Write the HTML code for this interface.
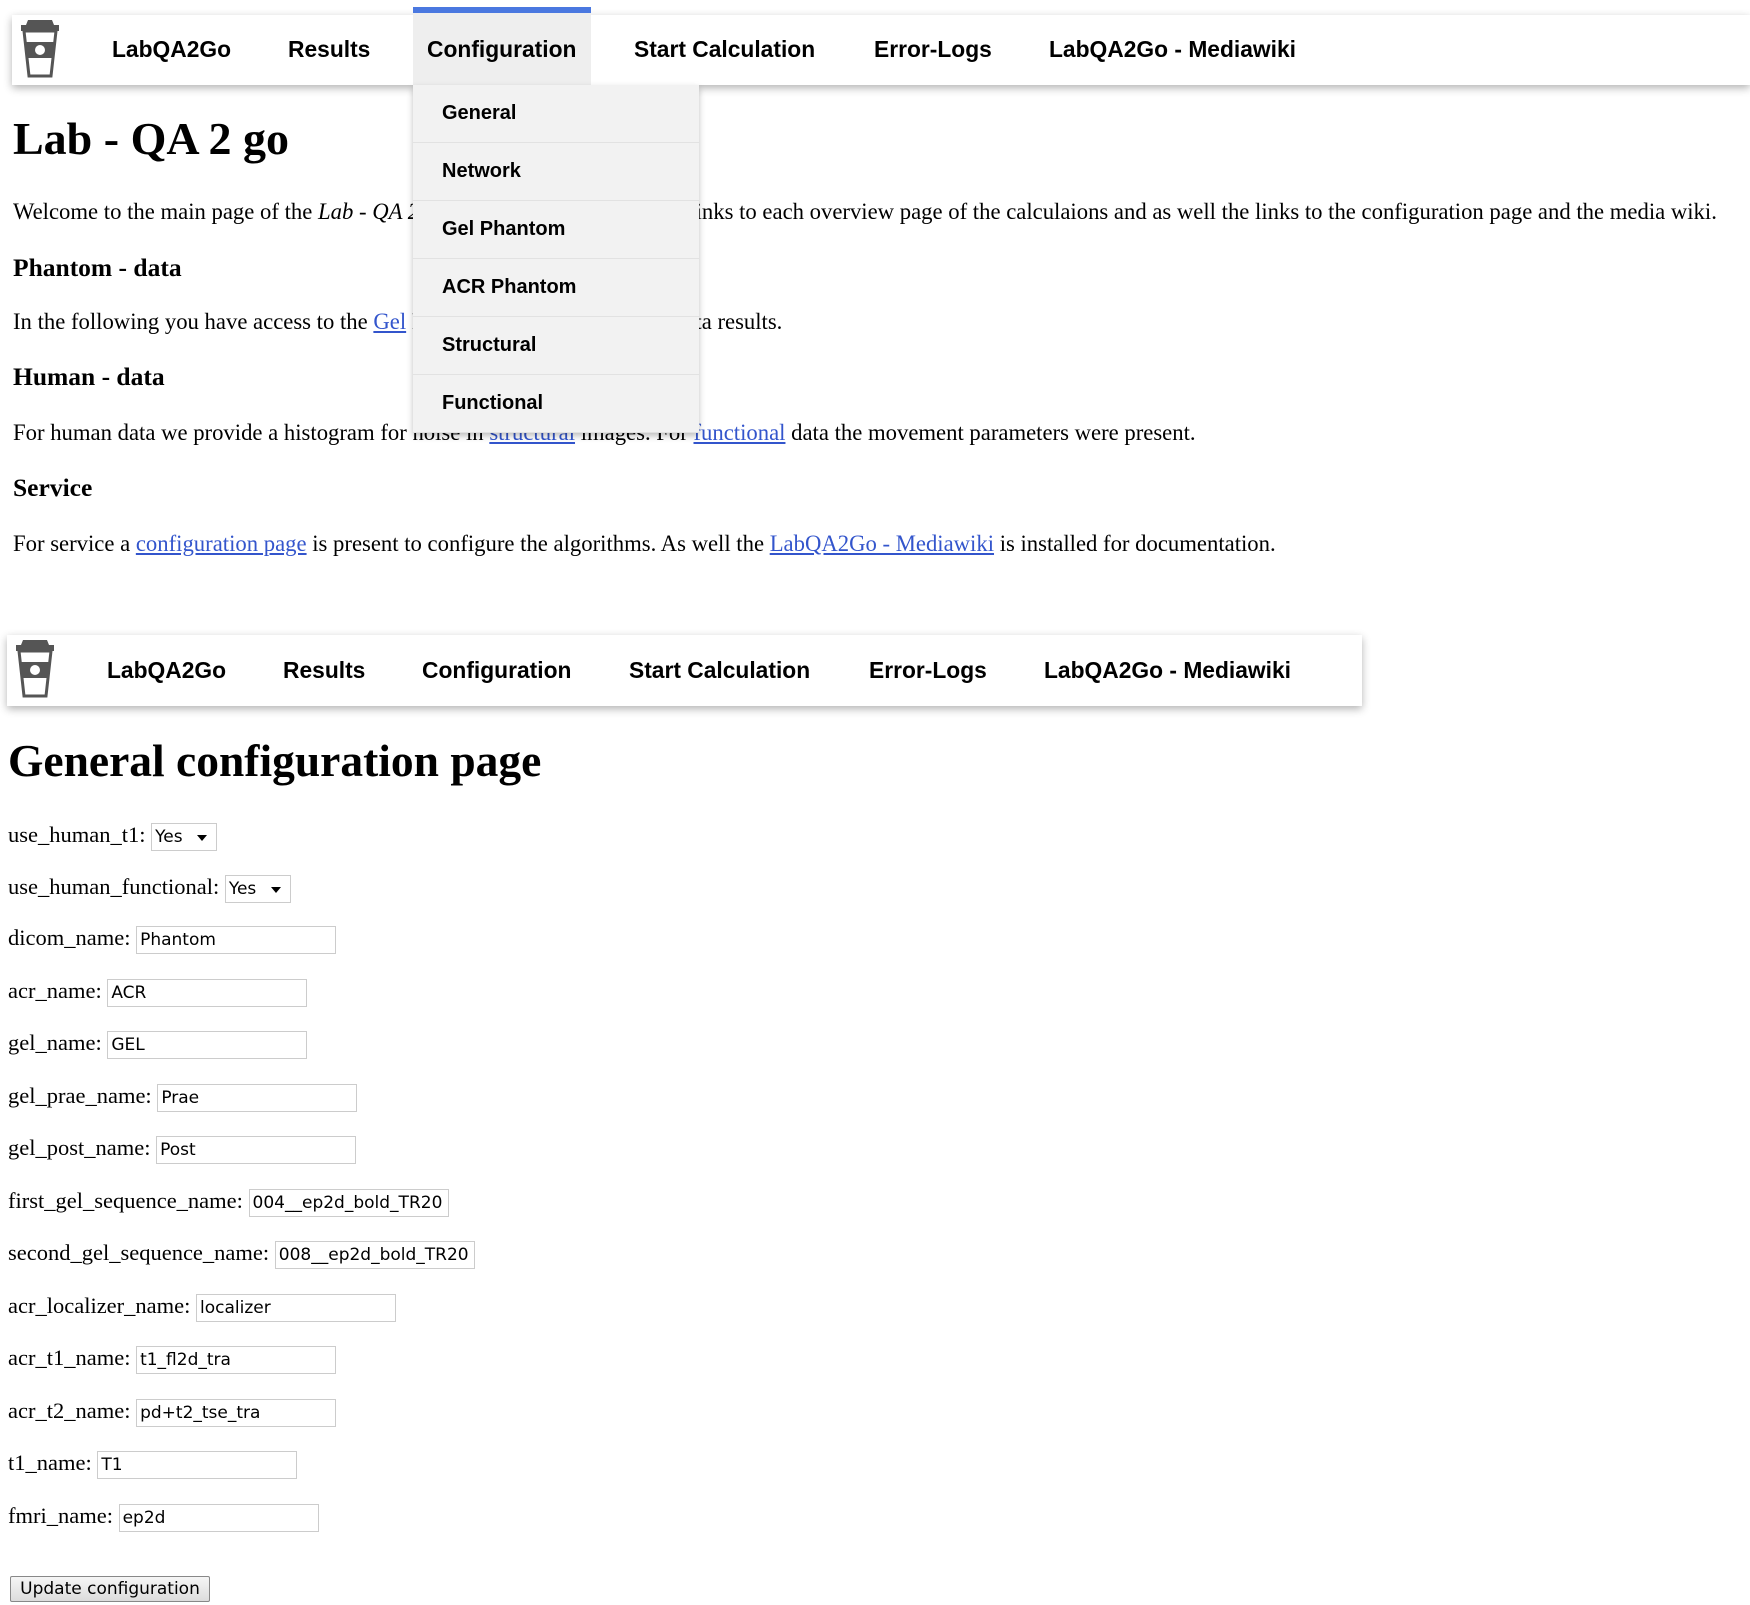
<!DOCTYPE html>
<html><head><meta charset="utf-8"><style>
html,body{margin:0;padding:0;background:#fff;width:1750px;height:1605px;overflow:hidden;position:relative;font-family:"Liberation Serif",serif;color:#000}
.nav{position:absolute;background:#fff;box-shadow:0 3px 8px rgba(0,0,0,.3)}
.nav span{position:absolute;font-family:"Liberation Sans",sans-serif;font-weight:bold;font-size:22.8px;white-space:nowrap}
.abs{position:absolute;white-space:nowrap}
p.t{position:absolute;left:13px;margin:0;font-size:22.7px;white-space:nowrap;line-height:26px}
h3.t{position:absolute;left:13px;margin:0;font-size:25.5px;line-height:28px}
a{color:#3355cc;text-decoration:underline}
.dd{position:absolute;left:413px;top:85px;width:286px;background:#f2f2f2;box-shadow:0 3px 6px rgba(0,0,0,.25)}
.dd div{height:57px;border-bottom:1px solid #e2e2e2;font-family:"Liberation Sans",sans-serif;font-weight:bold;font-size:20px;line-height:57px;padding-left:29px}
.row{position:absolute;left:8px;font-size:22.5px;white-space:nowrap;height:30px;line-height:30px}
.row input,.row .sel{font-family:"DejaVu Sans","Liberation Sans",sans-serif;font-size:17px;height:28px;box-sizing:border-box;border:1px solid #ccc;padding:0 3px;vertical-align:middle;background:#fff;color:#000}
.row input{width:200px}
.sel{display:inline-block;line-height:26px;width:66px;position:relative}
.sel:after{content:"";position:absolute;right:9px;top:11px;border-left:5px solid transparent;border-right:5px solid transparent;border-top:6px solid #000}
</style></head><body>

<div class="nav" style="left:12px;top:15px;width:1738px;height:70px">
<svg style="position:absolute;left:2px;top:3px" width="52" height="60" viewBox="0 0 52 60"><path d="M14 2h24l2 5H12z" fill="#555"/><rect x="7" y="7" width="38" height="6" fill="#555"/><path d="M10 13h32l-5 45H15z" fill="none" stroke="#555" stroke-width="3"/><rect x="12" y="24" width="28" height="16" fill="#555"/><circle cx="26" cy="32" r="5" fill="#fff"/></svg>
<span style="left:100px;top:21px">LabQA2Go</span>
<span style="left:276px;top:21px">Results</span>
<div style="position:absolute;left:401px;top:-8px;width:178px;height:78px;background:#eee;border-top:6px solid #4a78e0;box-sizing:border-box"></div>
<span style="left:415px;top:21px">Configuration</span>
<span style="left:622px;top:21px">Start Calculation</span>
<span style="left:862px;top:21px">Error-Logs</span>
<span style="left:1037px;top:21px">LabQA2Go - Mediawiki</span>
</div>

<h1 class="abs" style="left:13px;top:113px;margin:0;font-size:46px;line-height:52px">Lab - QA 2 go</h1>
<p class="t" style="top:199px">Welcome to the main page of the <i>Lab - QA 2 go</i>. Here you can find all the links to each overview page of the calculaions and as well the links to the configuration page and the media wiki.</p>
<h3 class="t" style="top:254px">Phantom - data</h3>
<p class="t" style="top:309px">In the following you have access to the <a>Gel</a> Phantom and ACR Phantom data results.</p>
<h3 class="t" style="top:363px">Human - data</h3>
<p class="t" style="top:420px">For human data we provide a histogram for noise in <a>structural</a> images. For <a>functional</a> data the movement parameters were present.</p>
<h3 class="t" style="top:474px">Service</h3>
<p class="t" style="top:531px">For service a <a>configuration page</a> is present to configure the algorithms. As well the <a>LabQA2Go - Mediawiki</a> is installed for documentation.</p>

<div class="dd"><div>General</div><div>Network</div><div>Gel Phantom</div><div>ACR Phantom</div><div>Structural</div><div>Functional</div></div>

<div class="nav" style="left:7px;top:635px;width:1355px;height:71px">
<svg style="position:absolute;left:2px;top:3px" width="52" height="60" viewBox="0 0 52 60"><path d="M14 2h24l2 5H12z" fill="#555"/><rect x="7" y="7" width="38" height="6" fill="#555"/><path d="M10 13h32l-5 45H15z" fill="none" stroke="#555" stroke-width="3"/><rect x="12" y="24" width="28" height="16" fill="#555"/><circle cx="26" cy="32" r="5" fill="#fff"/></svg>
<span style="left:100px;top:22px">LabQA2Go</span>
<span style="left:276px;top:22px">Results</span>
<span style="left:415px;top:22px">Configuration</span>
<span style="left:622px;top:22px">Start Calculation</span>
<span style="left:862px;top:22px">Error-Logs</span>
<span style="left:1037px;top:22px">LabQA2Go - Mediawiki</span>
</div>

<h1 class="abs" style="left:8px;top:736px;margin:0;font-size:45.5px;line-height:50px">General configuration page</h1>

<div class="row" style="top:820px">use_human_t1: <span class="sel">Yes</span></div>
<div class="row" style="top:872px">use_human_functional: <span class="sel">Yes</span></div>
<div class="row" style="top:923px">dicom_name: <input value="Phantom"></div>
<div class="row" style="top:976px">acr_name: <input value="ACR"></div>
<div class="row" style="top:1028px">gel_name: <input value="GEL"></div>
<div class="row" style="top:1081px">gel_prae_name: <input value="Prae"></div>
<div class="row" style="top:1133px">gel_post_name: <input value="Post"></div>
<div class="row" style="top:1186px">first_gel_sequence_name: <input value="004__ep2d_bold_TR20"></div>
<div class="row" style="top:1238px">second_gel_sequence_name: <input value="008__ep2d_bold_TR20"></div>
<div class="row" style="top:1291px">acr_localizer_name: <input value="localizer"></div>
<div class="row" style="top:1343px">acr_t1_name: <input value="t1_fl2d_tra"></div>
<div class="row" style="top:1396px">acr_t2_name: <input value="pd+t2_tse_tra"></div>
<div class="row" style="top:1448px">t1_name: <input value="T1"></div>
<div class="row" style="top:1501px">fmri_name: <input value="ep2d"></div>

<div class="abs" style="left:10px;top:1576px;width:200px;height:26px;box-sizing:border-box;border:1px solid #888;border-radius:2px;background:linear-gradient(#f6f6f6,#dcdcdc);font-family:'DejaVu Sans','Liberation Sans',sans-serif;font-size:17px;line-height:24px;text-align:center">Update configuration</div>
</body></html>
